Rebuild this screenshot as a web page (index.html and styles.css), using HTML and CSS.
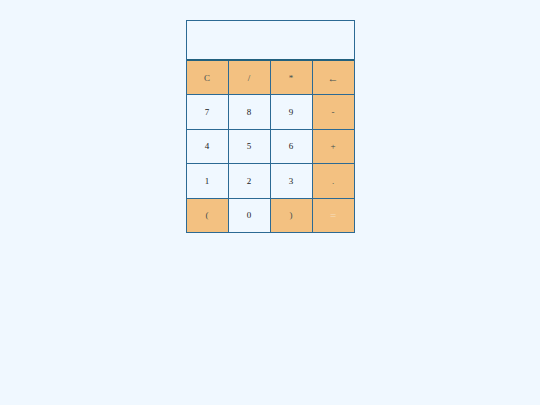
FILE: index.html
```html
<!DOCTYPE html>
<html lang="en">
    <head>
        <meta charset="UTF-8">
        <meta name="viewport" content="width=device-width, initial-scale=1.0">
        <title>Calculator</title>
        <link rel="stylesheet" href="styles.css">
    </head>

    <body>
        <main class="calculator">
            <input id="display" class="display" type="text" aria-label="Display" readonly>
            <div class="keys">
                <button class="key operator" type="button">C</button>
                <button class="key operator" type="button">/</button>
                <button class="key operator" type="button">*</button>
                <button class="key operator large" type="button">&larr;</button>
                <button class="key" type="button">7</button>
                <button class="key" type="button">8</button>
                <button class="key" type="button">9</button>
                <button class="key operator" type="button">-</button>
                <button class="key" type="button">4</button>
                <button class="key" type="button">5</button>
                <button class="key" type="button">6</button>
                <button class="key operator" type="button">+</button>
                <button class="key" type="button">1</button>
                <button class="key" type="button">2</button>
                <button class="key" type="button">3</button>
                <button class="key operator" type="button">.</button>
                <button class="key operator" type="button">(</button>
                <button class="key" type="button">0</button>
                <button class="key operator" type="button">)</button>
                <button class="key operator large equals" type="button">=</button>
            </div>
        </main>

        <script>
            const display = document.getElementById("display");

            function calculate() {
                try {
                    display.value = Function("return " + display.value)();
                } catch (e) {
                    display.value = "Error";
                }
            }

            document.querySelectorAll(".key").forEach((key) => {
                key.addEventListener("click", () => {
                    switch (key.textContent) {
                        case "C":
                            display.value = "";
                            break;
                        case "←":
                            display.value = display.value.slice(0, -1);
                            break;
                        case "=":
                            calculate();
                            break;
                        default:
                            display.value += key.textContent;
                    }
                });
            });
        </script>
    </body>
</html>
```

FILE: styles.css
```css
* {
    margin: 0;
    box-sizing: border-box;
}
body {
    background-color: aliceblue;
    font-family: "Liberation Serif", "Times New Roman", serif;
    padding: 20px;
}
.calculator {
    width: 169px;
    margin: 0 auto;
    border: 1px solid #2c6a94;
}
.display {
    display: block;
    width: 100%;
    height: 40px;
    padding: 0 8px;
    border: none;
    border-bottom: 2px solid #22617f;
    border-radius: 0;
    outline: none;
    background-color: aliceblue;
    font-family: inherit;
    font-size: 16px;
    text-align: right;
}
/* the gap colour shows through as the lines between keys */
.keys {
    display: grid;
    grid-template-columns: repeat(4, 1fr);
    grid-template-rows: repeat(5, 1fr);
    gap: 1px;
    height: 171px;
    background-color: #2c6a94;
}
.key {
    padding: 0;
    border: none;
    background-color: aliceblue;
    color: #222;
    font-family: inherit;
    font-size: 9px;
    cursor: pointer;
}
.operator {
    background-color: #f3c181;
    color: #3f4f50;
}
.large {
    font-size: 11px;
}
.equals {
    color: #f8dfbd;
}
.key:hover {
    opacity: 0.8;
}
```
